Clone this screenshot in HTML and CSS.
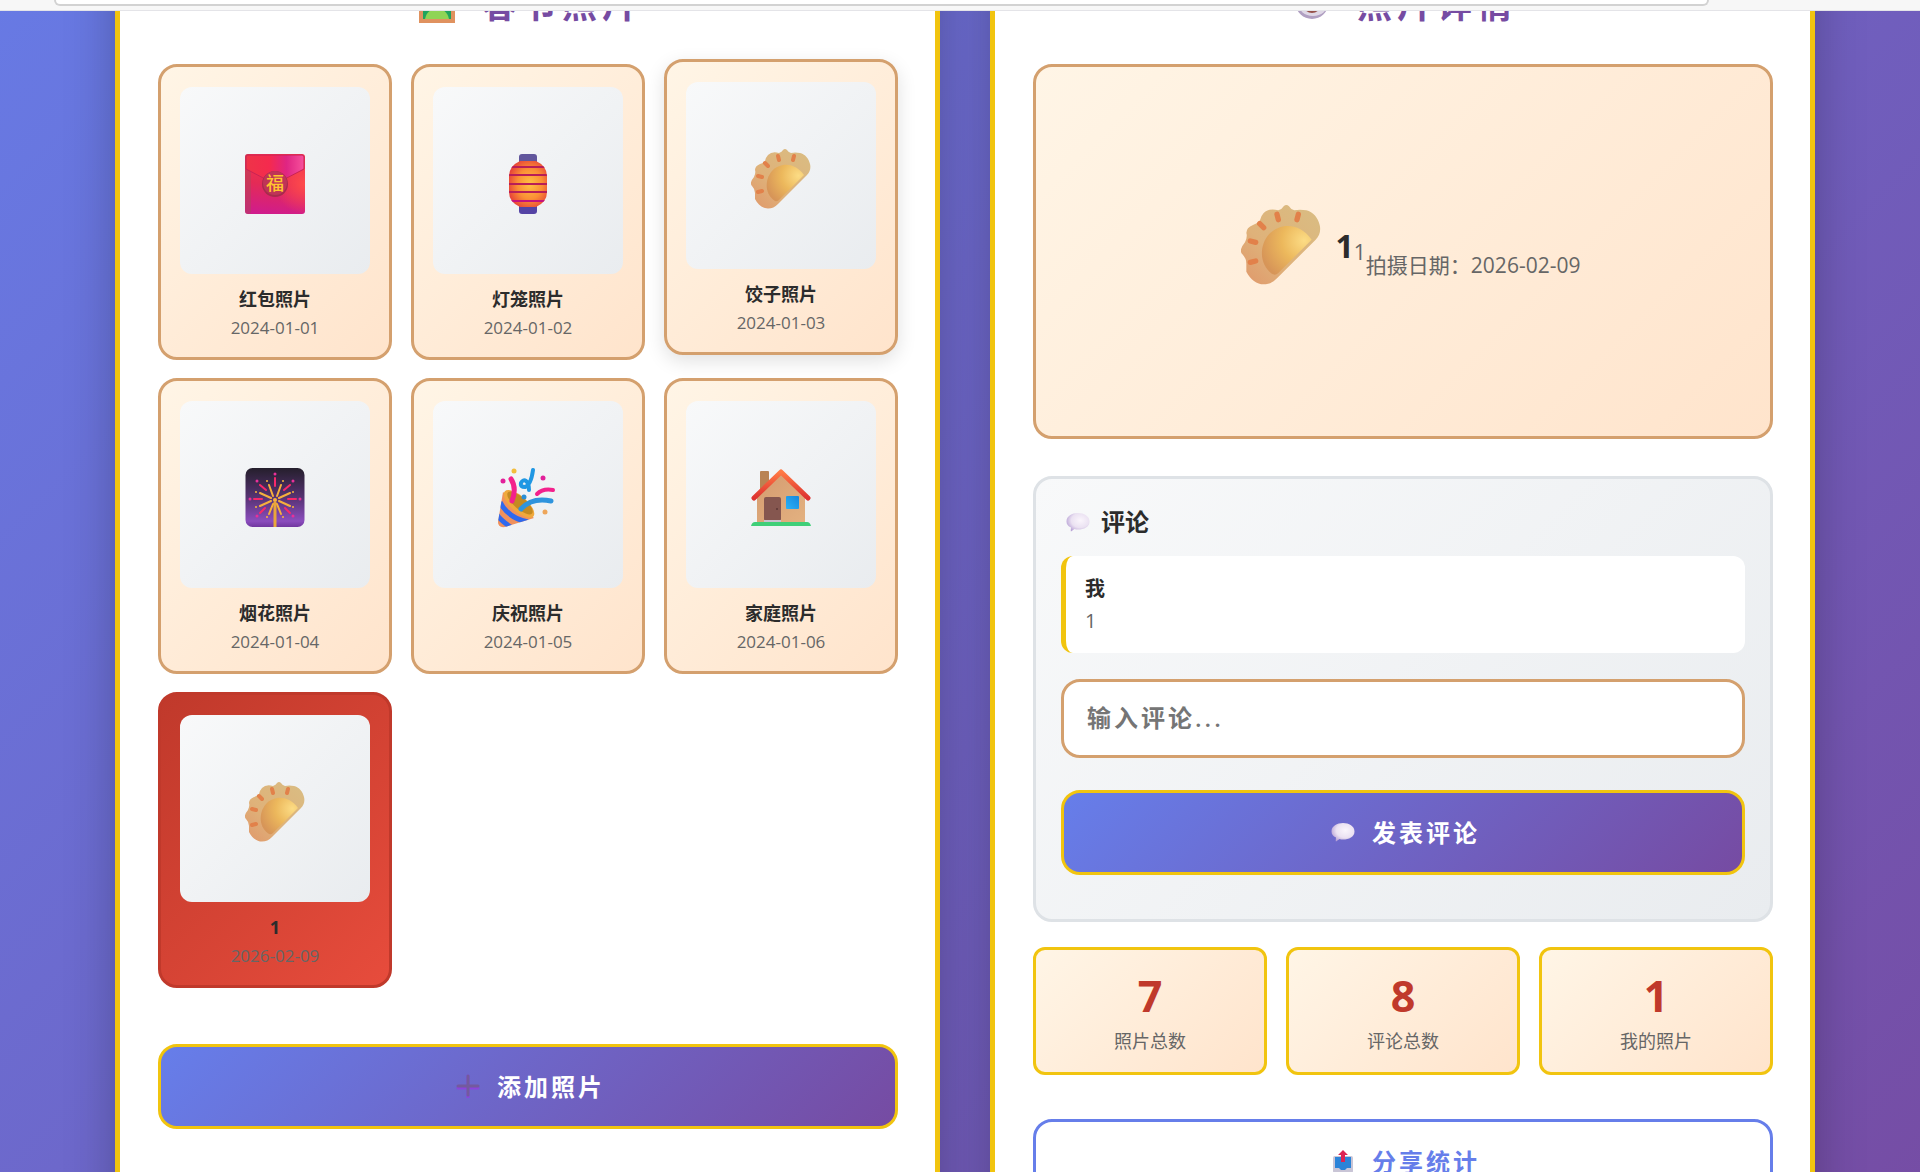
FILE: index.html
```
<!DOCTYPE html>
<html lang="zh-CN">
<head>
    <meta charset="UTF-8">
    <meta name="viewport" content="width=device-width, initial-scale=1.0">
    <title>春节照片</title>
    <link rel="stylesheet" href="styles.css">
</head>
<body>
<!-- 公用图标 -->
<svg class="sprite" aria-hidden="true">
    <defs>
        <linearGradient id="doughEdge" x1="1" y1="0" x2="0" y2="1">
            <stop offset="0" stop-color="#d9bd83"/>
            <stop offset="0.6" stop-color="#dfb27a"/>
            <stop offset="1" stop-color="#e0976a"/>
        </linearGradient>
        <radialGradient id="doughBody" cx="0.85" cy="0.3" r="0.9">
            <stop offset="0" stop-color="#fcdc85"/>
            <stop offset="0.5" stop-color="#ecb85c"/>
            <stop offset="1" stop-color="#d79558"/>
        </radialGradient>
        <radialGradient id="bubbleFill" cx="0.6" cy="0.4" r="0.65">
            <stop offset="0" stop-color="#faf5fc"/>
            <stop offset="0.6" stop-color="#ebe2f2"/>
            <stop offset="1" stop-color="#b9a3d6"/>
        </radialGradient>
    </defs>
    <symbol id="dumpling" viewBox="0 0 60 60">
        <path fill="url(#doughEdge)" d="M17 59.500C21 59.500 24 58 27 55L56 26C59 23 60 19 59 15C58 10 54 5 49 4Q44 3 40 4Q37 3 36 1Q34 -1 32 1Q31 3 28 4Q21 2 17 6Q15 8 14 12Q12 14 9 15Q4 17 4 21Q5 24 3 28Q-2 34 1 37Q4 40 4 44L4 50C7 56 12 59.500 17 59.500Z"/>
        <path fill="url(#doughBody)" d="M24 52C14 46 13 31 21 22C29 13 44 13 53 26L28 51Q26 53 24 52Z"/>
        <path stroke="#e2814a" stroke-width="4" stroke-linecap="round" fill="none" d="M43 7L42 11M27 7L28 11M14 14L17 17M7 27L11 28M7 43L11 42"/>
    </symbol>
    <symbol id="bubble" viewBox="0 0 24 24">
        <path fill="url(#bubbleFill)" d="M12 3C18 3 23.500 6 23.500 11.500C23.500 17 18 19.500 12 19.500Q10 19.500 8.500 19L5 21.500Q4.500 21.500 5 17.500Q0.500 15.500 0.500 11.500C0.500 6 6 3 12 3Z"/>
    </symbol>
</svg>

<div class="browser-bar">
    <div class="address"></div>
</div>

<main class="container">
    <section class="panel">
        <h2 class="panel-title">
            <svg class="title-icon" viewBox="0 0 36 36" aria-hidden="true">
                <rect width="36" height="36" fill="#e0925f"/>
                <rect x="4" y="4" width="28" height="28" fill="#3fb6e8"/>
                <path fill="#1fa45c" d="M4 14L14 8L32 18V32H4Z"/>
                <path fill="#8fd455" d="M6 32Q8 22 18 22Q28 22 30 32Z"/>
            </svg>
            <span>春节照片</span>
        </h2>

        <div class="photo-grid">
            <article class="photo-card">
                <div class="photo">
                    <svg class="emoji" viewBox="0 0 60 60" role="img" aria-label="红包">
                        <defs>
                            <linearGradient id="envBack" x1="0.5" y1="0" x2="0.4" y2="1">
                                <stop offset="0" stop-color="#f5364f"/>
                                <stop offset="0.5" stop-color="#e42b55"/>
                                <stop offset="1" stop-color="#d01c8c"/>
                            </linearGradient>
                            <linearGradient id="envFlap" x1="0" y1="0" x2="1" y2="0">
                                <stop offset="0" stop-color="#ee3448"/>
                                <stop offset="0.4" stop-color="#f52a4e"/>
                                <stop offset="0.7" stop-color="#df2583"/>
                                <stop offset="1" stop-color="#f7519c"/>
                            </linearGradient>
                            <radialGradient id="envGlow" cx="1" cy="0.5" r="0.5">
                                <stop offset="0" stop-color="#ff4b4b"/>
                                <stop offset="1" stop-color="#ff4b4b" stop-opacity="0"/>
                            </radialGradient>
                        </defs>
                        <rect width="60" height="60" rx="3" fill="url(#envBack)"/>
                        <rect width="60" height="60" rx="3" fill="url(#envGlow)"/>
                        <rect width="6" height="60" rx="3" fill="#b0435c" opacity="0.5"/>
                        <path fill="url(#envFlap)" stroke="#c92355" d="M1 3Q1 1 3 1H57Q59 1 59 3V15L36 27Q30 30 24 27L1 15Z"/>
                        <circle cx="30" cy="30" r="13" fill="#a82a4c"/>
                        <circle cx="30" cy="29" r="12" fill="#bf3457"/>
                        <text class="fu" x="30" y="36" text-anchor="middle">福</text>
                    </svg>
                </div>
                <h3 class="photo-name">红包照片</h3>
                <p class="photo-date">2024-01-01</p>
            </article>

            <article class="photo-card">
                <div class="photo">
                    <svg class="emoji" viewBox="0 0 60 60" role="img" aria-label="灯笼">
                        <defs>
                            <radialGradient id="lantern" cx="0.55" cy="0.5" r="0.6">
                                <stop offset="0" stop-color="#ffc243"/>
                                <stop offset="0.55" stop-color="#fb8f35"/>
                                <stop offset="1" stop-color="#e63f38"/>
                            </radialGradient>
                            <clipPath id="lanternClip">
                                <path d="M22 7H38Q49 12 49 22V38Q49 48 38 53H22Q11 48 11 38V22Q11 12 22 7Z"/>
                            </clipPath>
                        </defs>
                        <rect x="21" y="0" width="18" height="12" rx="3" fill="#61569c"/>
                        <rect x="21" y="48" width="18" height="12" rx="3" fill="#5443a5"/>
                        <g clip-path="url(#lanternClip)">
                            <rect x="11" y="7" width="38" height="46" fill="url(#lantern)"/>
                            <path stroke="#b81e58" stroke-width="2" d="M11 13H49M11 21H49M11 30H49M11 38H49"/>
                            <path stroke="#c4127c" stroke-width="2" d="M11 47H49"/>
                        </g>
                    </svg>
                </div>
                <h3 class="photo-name">灯笼照片</h3>
                <p class="photo-date">2024-01-02</p>
            </article>

            <article class="photo-card raised">
                <div class="photo">
                    <svg class="emoji" role="img" aria-label="饺子"><use href="#dumpling"/></svg>
                </div>
                <h3 class="photo-name">饺子照片</h3>
                <p class="photo-date">2024-01-03</p>
            </article>

            <article class="photo-card">
                <div class="photo">
                    <svg class="emoji" viewBox="0 0 60 60" role="img" aria-label="烟花">
                        <defs>
                            <linearGradient id="night" x1="0" y1="0" x2="0" y2="1">
                                <stop offset="0" stop-color="#251f2c"/>
                                <stop offset="0.5" stop-color="#563373"/>
                                <stop offset="0.9" stop-color="#8b4dbd"/>
                                <stop offset="1" stop-color="#70379f"/>
                            </linearGradient>
                        </defs>
                        <rect x="0.500" y="0" width="59" height="59" rx="7" fill="url(#night)"/>
                        <path stroke="#e9a63a" stroke-width="3" d="M30 34V59"/>
                        <g stroke="#f6b03c" stroke-width="2" stroke-linecap="round">
                            <path d="M28 28L24 17M32 28L36 17M26 30L15 25M34 30L45 25M26 33L15 38M34 33L45 38M28 36L24 46M32 36L36 46"/>
                        </g>
                        <g stroke="#f7296b" stroke-width="2" stroke-linecap="round">
                            <path d="M30 10V18M15 17L21 22M45 17L39 22M9 31H17M43 31H51M15 45L20 40M45 45L40 40"/>
                        </g>
                        <g fill="#e9309a">
                            <circle cx="30" cy="6" r="1.500"/><circle cx="12" cy="13" r="1.500"/><circle cx="48" cy="13" r="1.500"/>
                            <circle cx="5" cy="31" r="1.500"/><circle cx="55" cy="31" r="1.500"/><circle cx="12" cy="48" r="1.500"/><circle cx="48" cy="48" r="1.500"/>
                        </g>
                        <g fill="#f9b43e">
                            <circle cx="30" cy="32" r="2"/><circle cx="22" cy="13" r="1"/><circle cx="38" cy="13" r="1"/>
                            <circle cx="11" cy="24" r="1"/><circle cx="48" cy="24" r="1"/><circle cx="11" cy="39" r="1"/>
                            <circle cx="48" cy="39" r="1"/><circle cx="22" cy="49" r="1"/><circle cx="38" cy="49" r="1"/>
                        </g>
                    </svg>
                </div>
                <h3 class="photo-name">烟花照片</h3>
                <p class="photo-date">2024-01-04</p>
            </article>

            <article class="photo-card">
                <div class="photo">
                    <svg class="emoji" viewBox="0 0 60 60" role="img" aria-label="庆祝">
                        <defs>
                            <clipPath id="coneClip">
                                <path d="M5 24L0 54Q0 60 7 59L36 50Z"/>
                            </clipPath>
                        </defs>
                        <g clip-path="url(#coneClip)">
                            <rect y="20" width="40" height="40" fill="#f0915c"/>
                            <path fill="none" stroke="#2f69ee" stroke-width="5" d="M2 34Q10 50 30 54M-1 47Q4 54 16 61"/>
                        </g>
                        <ellipse cx="21" cy="36" rx="19" ry="8" transform="rotate(41 21 36)" fill="#f0a93c"/>
                        <ellipse cx="22" cy="35" rx="16" ry="6" transform="rotate(41 22 35)" fill="#c48a22"/>
                        <g fill="none" stroke-width="5" stroke-linecap="round">
                            <path stroke="#f3218c" d="M13 11Q19 20 14 33"/>
                            <path stroke="#f3218c" stroke-width="4" d="M39 26Q45 20 55 22"/>
                            <path stroke="#2f94dd" d="M23 41Q34 29 53 33"/>
                            <path stroke="#1f97e3" stroke-width="4" d="M35 2Q33 17 27 19Q22 19 23 15Q25 11 28 13Q31 15 31 22"/>
                        </g>
                        <circle cx="16" cy="3" r="2.500" fill="#f3bd3c"/>
                        <circle cx="5" cy="13" r="2.500" fill="#e2209a"/>
                        <circle cx="45" cy="10" r="2.500" fill="#e2209a"/>
                        <circle cx="26" cy="29" r="2.500" fill="#2a8fd6"/>
                        <circle cx="47" cy="44" r="2.500" fill="#eea65a"/>
                    </svg>
                </div>
                <h3 class="photo-name">庆祝照片</h3>
                <p class="photo-date">2024-01-05</p>
            </article>

            <article class="photo-card">
                <div class="photo">
                    <svg class="emoji" viewBox="0 0 60 60" role="img" aria-label="家">
                        <defs>
                            <linearGradient id="wall" x1="0" y1="0" x2="1" y2="1">
                                <stop offset="0" stop-color="#d49b70"/>
                                <stop offset="1" stop-color="#e3b180"/>
                            </linearGradient>
                            <linearGradient id="roof" x1="0" y1="0" x2="0" y2="1">
                                <stop offset="0" stop-color="#ff7a45"/>
                                <stop offset="1" stop-color="#dd3230"/>
                            </linearGradient>
                            <linearGradient id="glass" x1="0" y1="1" x2="1" y2="0">
                                <stop offset="0" stop-color="#2cb2f7"/>
                                <stop offset="1" stop-color="#1687dd"/>
                            </linearGradient>
                        </defs>
                        <rect x="9" y="3" width="9" height="20" rx="1" fill="#b98353"/>
                        <path fill="url(#wall)" d="M6 28L30 5L54 28V54H6Z"/>
                        <path fill="none" stroke="url(#roof)" stroke-width="5" stroke-linecap="round" stroke-linejoin="round" d="M3 30L30 4L57 30"/>
                        <rect x="13" y="29" width="17" height="24" rx="2" fill="#85564f"/>
                        <circle cx="26" cy="41" r="1" fill="#5d3735"/>
                        <rect x="35" y="28" width="13" height="13" rx="1" fill="url(#glass)"/>
                        <path fill="#3fcf78" d="M0 58Q1 54 4 54H56Q59 54 60 58Z"/>
                        <rect x="13" y="52" width="17" height="2" fill="#c9c1cf"/>
                    </svg>
                </div>
                <h3 class="photo-name">家庭照片</h3>
                <p class="photo-date">2024-01-06</p>
            </article>

            <article class="photo-card selected">
                <div class="photo">
                    <svg class="emoji" role="img" aria-label="饺子"><use href="#dumpling"/></svg>
                </div>
                <h3 class="photo-name">1</h3>
                <p class="photo-date">2026-02-09</p>
            </article>
        </div>

        <button type="button" class="btn btn-add">
            <svg class="btn-icon" viewBox="0 0 24 24" aria-hidden="true">
                <path stroke="#8b45dd" stroke-width="3" stroke-linecap="round" d="M12 2V23M2 14H22"/>
                <path stroke="#735a9e" stroke-width="3" stroke-linecap="round" d="M12 2V21M2 12H22"/>
            </svg>
            <span>添加照片</span>
        </button>
    </section>

    <section class="panel">
        <h2 class="panel-title">
            <svg class="title-icon" viewBox="0 0 36 36" aria-hidden="true">
                <ellipse cx="18" cy="17" rx="16" ry="15" fill="#b09fc2"/>
                <ellipse cx="19" cy="16" rx="15" ry="13" fill="#dfd8e6"/>
                <circle cx="18" cy="17" r="9" fill="#96514a"/>
                <circle cx="18" cy="14" r="4" fill="#33222a"/>
            </svg>
            <span>照片详情</span>
        </h2>

        <div class="detail">
            <div class="detail-photo">
                <svg class="detail-emoji" role="img" aria-label="饺子"><use href="#dumpling"/></svg>
            </div>
            <h3 class="detail-name">1</h3>
            <p class="detail-desc">1</p>
            <p class="detail-date">拍摄日期：2026-02-09</p>
        </div>

        <div class="comments">
            <h3 class="comments-title">
                <svg class="btn-icon" aria-hidden="true"><use href="#bubble"/></svg>
                <span>评论</span>
            </h3>
            <div class="comment">
                <p class="comment-author">我</p>
                <p class="comment-text">1</p>
            </div>
            <input class="comment-input" type="text" aria-label="输入评论" placeholder="输入评论...">
            <button type="button" class="btn btn-comment">
                <svg class="btn-icon" aria-hidden="true"><use href="#bubble"/></svg>
                <span>发表评论</span>
            </button>
        </div>

        <div class="stats">
            <div class="stat">
                <div class="stat-number">7</div>
                <div class="stat-label">照片总数</div>
            </div>
            <div class="stat">
                <div class="stat-number">8</div>
                <div class="stat-label">评论总数</div>
            </div>
            <div class="stat">
                <div class="stat-number">1</div>
                <div class="stat-label">我的照片</div>
            </div>
        </div>

        <button type="button" class="btn btn-share">
            <svg class="btn-icon" viewBox="0 0 24 24" aria-hidden="true">
                <rect x="2" y="7" width="20" height="17" rx="2" fill="#c9c5d6"/>
                <path fill="#2b83d8" d="M4 8H20V19H16L14 21H10L8 19H4Z"/>
                <path fill="#dc2453" d="M12 1L17 6H14V13H10V6H7Z"/>
            </svg>
            <span>分享统计</span>
        </button>
    </section>
</main>
</body>
</html>
```

FILE: styles.css
```
* {
    margin: 0;
    padding: 0;
    box-sizing: border-box;
}

body {
    height: 100vh;
    display: flex;
    flex-direction: column;
    overflow: hidden;
    font-family: "Open Sans", "Noto Sans CJK SC", sans-serif;
    color: #2c2c2c;
    background: linear-gradient(135deg, #667eea -10%, #764ba2 105%);
}

.sprite {
    position: absolute;
    width: 0;
    height: 0;
}

/* 顶部浏览器栏 */
.browser-bar {
    flex: none;
    height: 11px;
    padding: 0 211px 0 54px;
    background: #f7f7f7;
    border-bottom: 1px solid #e4e4e8;
}

.address {
    height: 6px;
    background: #fff;
    border: 2px solid #d2d2d2;
    border-top: none;
    border-radius: 0 0 12px 12px;
}

.container {
    flex: 1;
    min-height: 0;
    display: grid;
    grid-template-columns: 1fr 1fr;
    gap: 50px;
    padding: 0 105px 0 115px;
    overflow: hidden;
}

/* 面板 */
.panel {
    height: 1500px;
    margin-top: -75px;
    padding: 40px 37px 50px 38px;
    background: #fff;
    border: 5px solid #f1c40f;
    border-radius: 25px;
    box-shadow: 0 12px 50px rgba(0, 0, 0, 0.25);
}

.panel-title {
    display: flex;
    justify-content: center;
    align-items: center;
    gap: 27px;
    height: 48px;
    padding-left: 5px;
    margin-bottom: 35px;
    color: #764ba2;
    font-size: 35px;
    line-height: 48px;
    letter-spacing: 5px;
}

.title-icon {
    width: 36px;
    height: 36px;
}

/* 照片列表 */
.photo-grid {
    display: grid;
    grid-template-columns: repeat(3, 1fr);
    gap: 18px 19px;
}

.photo-card {
    padding: 20px 19px 16px;
    text-align: center;
    background: linear-gradient(135deg, #fff5e6 0%, #ffe4cc 100%);
    border: 3px solid #d4a06e;
    border-radius: 19px;
}

.raised {
    transform: translateY(-5px);
    box-shadow: 0 6px 19px rgba(0, 0, 0, 0.12);
}

.selected {
    background: linear-gradient(135deg, #c0392b 0%, #e74c3c 100%);
    border-color: #c0392b;
}

.photo {
    display: flex;
    justify-content: center;
    align-items: center;
    height: 187px;
    padding-top: 6px;
    margin-bottom: 11px;
    background: linear-gradient(135deg, #f8f9fa 0%, #e9ecef 100%);
    border-radius: 12px;
}

.emoji {
    width: 60px;
    height: 60px;
}

.fu {
    font-size: 18px;
    font-weight: 500;
    fill: #ffc62e;
}

.photo-name {
    font-size: 18px;
    line-height: 29px;
}

.photo-date {
    color: #666;
    font-size: 17px;
    line-height: 27px;
}

/* 按钮 */
.btn {
    display: flex;
    justify-content: center;
    align-items: center;
    gap: 17px;
    width: 100%;
    height: 85px;
    padding: 0 0 2px 5px;
    color: #fff;
    font-family: inherit;
    font-size: 24px;
    font-weight: bold;
    letter-spacing: 3px;
    background: linear-gradient(135deg, #667eea 0%, #764ba2 100%);
    border: 3px solid #f1c40f;
    border-radius: 19px;
    cursor: pointer;
}

.btn-icon {
    width: 24px;
    height: 24px;
}

.btn-add {
    margin-top: 56px;
}

.btn-share {
    margin-top: 44px;
    color: #667eea;
    background: #fff;
    border-color: #667eea;
}

/* 照片详情 */
.detail {
    display: flex;
    justify-content: center;
    align-items: center;
    height: 375px;
    margin-bottom: 37px;
    color: #666;
    font-size: 21px;
    line-height: 32px;
    background: linear-gradient(135deg, #fff5e6 0%, #ffe4cc 100%);
    border: 3px solid #d4a06e;
    border-radius: 19px;
}

.detail-photo {
    display: flex;
    padding: 0 15px;
    margin-bottom: 14px;
}

.detail-emoji {
    width: 80px;
    height: 80px;
}

.detail-name {
    margin-bottom: 12px;
    color: #2c2c2c;
    font-size: 32px;
}

.detail-date {
    margin-top: 26px;
}

/* 评论 */
.comments {
    padding: 25px 25px 44px;
    background: linear-gradient(135deg, #f8f9fa 0%, #e9ecef 100%);
    border: 3px solid #dee2e6;
    border-radius: 19px;
}

.comments-title {
    display: flex;
    align-items: center;
    gap: 11px;
    padding-left: 5px;
    margin-bottom: 16px;
    font-size: 24px;
    line-height: 36px;
}

.comment {
    padding: 20px 19px 19px;
    font-size: 20px;
    line-height: 26px;
    background: #fff;
    border-left: 5px solid #f1c40f;
    border-radius: 12px;
}

.comment-author {
    margin-bottom: 6px;
    font-weight: bold;
}

.comment-text {
    color: #666;
}

.comment-input {
    display: block;
    width: 100%;
    height: 79px;
    margin: 26px 0 32px;
    padding: 0 23px 2px;
    font-family: inherit;
    font-size: 24px;
    font-weight: 600;
    letter-spacing: 3px;
    background: #fff;
    border: 3px solid #d4a06e;
    border-radius: 19px;
}

.comment-input::placeholder {
    color: #757575;
}

/* 统计 */
.stats {
    display: grid;
    grid-template-columns: repeat(3, 1fr);
    gap: 19px;
    margin-top: 25px;
}

.stat {
    height: 128px;
    padding-top: 19px;
    text-align: center;
    background: linear-gradient(135deg, #fff5e6 0%, #ffe4cc 100%);
    border: 3px solid #f1c40f;
    border-radius: 12px;
}

.stat-number {
    color: #c0392b;
    font-size: 43px;
    font-weight: bold;
    line-height: 54px;
}

.stat-label {
    color: #666;
    font-size: 18px;
    line-height: 36px;
}
```
